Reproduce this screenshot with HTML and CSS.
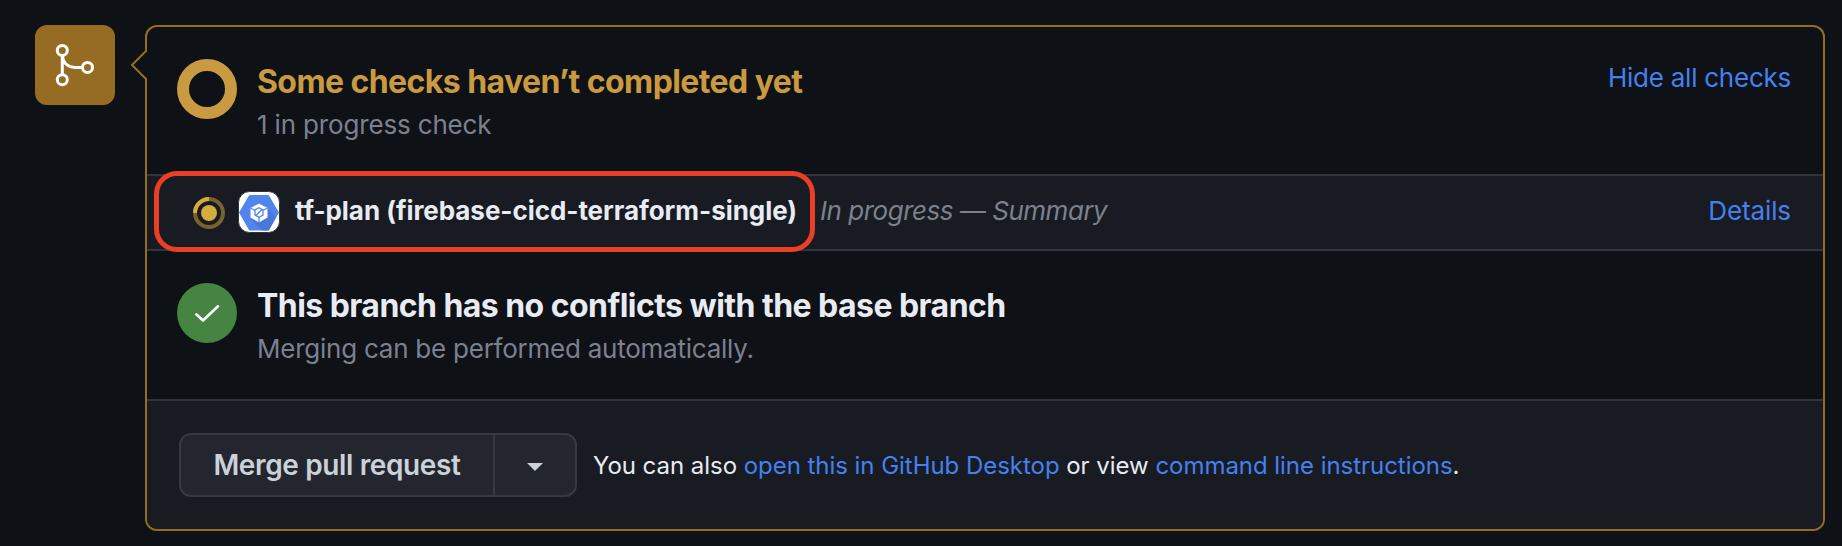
FILE: index.html
```html
<!DOCTYPE html>
<html lang="en">
<head>
<meta charset="utf-8">
<title>Merge status</title>
<link rel="stylesheet" href="styles.css">
</head>
<body>
<main class="timeline">
  <div class="badge">
    <svg width="80" height="80" viewBox="0 0 80 80" fill="none" stroke="#fff" stroke-width="3">
      <circle cx="27.3" cy="25.4" r="5"/><circle cx="27.3" cy="54.7" r="5"/><circle cx="52.5" cy="42.4" r="5"/>
      <path d="M27.3 30.5V49.500M27.3 30.500C28 38 33 42.400 40 42.400H47.500"/>
    </svg>
  </div>
  <section class="box">
    <svg class="notch" width="18" height="30" viewBox="0 0 18 30"><path class="notch-fill" d="M18 2H15L2 15L15 28H18Z"/><path class="notch-line" d="M16 1L2 15L16 29"/></svg>
    <div class="status">
      <svg class="state" width="60" height="60"><circle cx="30" cy="30" r="24" fill="none" stroke="#c99a3f" stroke-width="12"/></svg>
      <div class="copy">
        <h2 class="title pending">Some checks haven’t completed yet</h2>
        <p class="sub">1 in progress check</p>
      </div>
      <a class="link toggle">Hide all checks</a>
    </div>
    <div class="check">
      <svg class="spinner" width="32" height="32" fill="none" stroke-width="4"><circle cx="16" cy="16" r="14" stroke="#77632e"/><path d="M2 16A14 14 0 0 1 16 2" stroke="#d4ad3c"/><circle cx="16" cy="16" r="8" fill="#d4ad3c"/></svg>
      <svg class="app" width="42" height="42" viewBox="-1 -1 42 42">
        <rect x="-.5" y="-.5" width="41" height="41" rx="11" fill="#fff" stroke="#30343b"/>
        <path d="M0 20.5L10 3.500Q10.500 3 11 3H29Q29.500 3 30 3.500L40 20.500L30 38Q29.500 38.500 29 38.500H11Q10.500 38.500 10 38Z" fill="#5085ed"/>
        <path d="M28.500 16L37 25.500L30 38Q29.500 38.500 29 38.500H23L12 27Z" fill="#4a78d8"/>
        <path d="M20 11.500L28.500 16V25.500L20 30.500L11.500 25.500V16Z" fill="#fff"/>
        <path d="M11.500 16L16 18.500M28.500 16L24 18.500M20 25V31" stroke="#5085ed" stroke-width="1.300"/>
        <path d="M20 15.800L24 18V23L20 25.300L16 23V18ZM17 23.500L23 17.500" fill="none" stroke="#5085ed" stroke-width="1.300"/>
      </svg>
      <strong class="name">tf-plan (firebase-cicd-terraform-single)</strong>
      <em class="progress">In progress — Summary</em>
      <a class="link details">Details</a>
      <div class="highlight"></div>
    </div>
    <div class="status clean">
      <svg class="state" width="60" height="60"><circle cx="30" cy="30" r="30" fill="#458441"/><path d="M19.300 31.300L26 37.500L41 23.300" fill="none" stroke="#fff" stroke-width="2.600" stroke-linecap="round" stroke-linejoin="round"/></svg>
      <div class="copy">
        <h2 class="title">This branch has no conflicts with the base branch</h2>
        <p class="sub merging">Merging can be performed automatically.</p>
      </div>
    </div>
    <div class="merge">
      <div class="buttons">
        <button class="main">Merge pull request</button>
        <button class="caret"><svg width="16" height="8"><path d="M0 0H16L8 8Z" fill="#c9d1d9"/></svg></button>
      </div>
      <p class="hint">You can also <a class="link">open this in GitHub Desktop</a> or view <a class="link">command line instructions</a>.</p>
    </div>
  </section>
</main>
</body>
</html>
```
FILE: styles.css
```css
* { box-sizing: border-box; }
body { margin: 0; background: #0e1116; color: #e8ebf1; font: 430 26px/40px Inter, "Liberation Sans", sans-serif; height: 546px; overflow: hidden; white-space: nowrap; }
h2, p { margin: 0; }
svg { display: block; flex: none; }
.timeline { display: flex; gap: 30px; padding: 25px 17px 15px 35px; height: 546px; }
.badge { width: 80px; height: 80px; border-radius: 12px; background: #966c23; flex: none; }
.box { position: relative; flex: 1; display: flex; flex-direction: column; border: 2px solid #966c23; border-radius: 12px; }
.notch { position: absolute; left: -17px; top: 23px; }
.notch-fill { fill: #0e1116; }
.notch-line { fill: none; stroke: #966c23; stroke-width: 2; }
.status { display: flex; height: 147px; padding: 32px 32px 0 30px; }
.clean { height: 148px; }
.state { margin-right: 20px; }
.copy { flex: 1; padding-top: 1px; }
.title { font-size: 32px; line-height: 44px; font-weight: 650; letter-spacing: -.55px; }
.pending { color: #c99a3f; letter-spacing: -.58px; }
.sub { color: #7b818d; line-height: 42px; letter-spacing: -.16px; }
.merging { letter-spacing: -.24px; }
.link { color: #4580f0; }
.toggle { margin-top: -1px; letter-spacing: -.25px; }
.check { position: relative; height: 77px; display: flex; align-items: center; padding: 0 32px 0 46px; background: #181b22; border-top: 2px solid #30343b; border-bottom: 2px solid #30343b; }
.app { margin-left: 13px; margin-bottom: 1px; }
.name { margin: 0 0 4px 15px; font-weight: 650; letter-spacing: -.05px; }
.progress { margin: 0 0 4px 23px; color: #7b818d; letter-spacing: -.48px; }
.details { margin: 0 0 4px auto; letter-spacing: -.1px; }
.highlight { position: absolute; left: 7px; top: -5px; width: 661px; height: 81px; border: 5px solid #ea3f25; border-radius: 23px; }
.merge { flex: 1; display: flex; align-items: center; padding: 0 32px; background: #181b22; border-top: 2px solid #30343b; border-radius: 0 0 10px 10px; }
.buttons { display: flex; width: 398px; height: 64px; border: 2px solid #363940; border-radius: 12px; background: #23262e; }
button { margin: 0; padding: 0; border: 0; background: none; font: inherit; color: #c9d1d9; }
.main { width: 312px; font-size: 28px; font-weight: 580; letter-spacing: -.37px; }
.caret { flex: 1; border-left: 2px solid #363940; display: flex; align-items: center; justify-content: center; padding-top: 3px; }
.hint { margin: 2px 0 0 16px; font-size: 24px; letter-spacing: -.04px; }
```
